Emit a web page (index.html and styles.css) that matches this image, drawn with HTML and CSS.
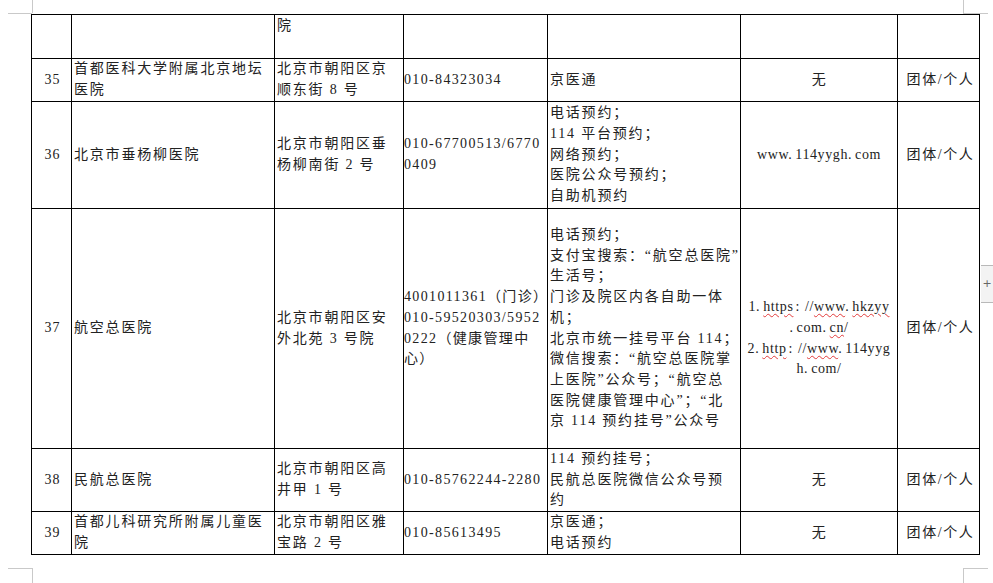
FILE: index.html
```html
<!DOCTYPE html>
<html lang="zh-CN">
<head>
<meta charset="utf-8">
<title>医院预约方式</title>
<link rel="stylesheet" href="styles.css">
</head>
<body>
<div class="page">
  <div class="mark mark-tl-h"></div>
  <div class="mark mark-tl-v"></div>
  <div class="mark mark-tr-h"></div>
  <div class="mark mark-tr-v"></div>
  <div class="mark mark-bl-h"></div>
  <div class="mark mark-bl-v"></div>
  <div class="mark mark-br-h"></div>
  <div class="mark mark-br-v"></div>
  <div class="add-tab">+</div>

  <table class="grid">
    <colgroup>
      <col class="c-no">
      <col class="c-name">
      <col class="c-addr">
      <col class="c-tel">
      <col class="c-way">
      <col class="c-web">
      <col class="c-type">
    </colgroup>
    <tbody>
      <tr class="r-top">
        <td></td>
        <td></td>
        <td class="addr top">院</td>
        <td></td>
        <td></td>
        <td></td>
        <td></td>
      </tr>
      <tr class="r-35">
        <td class="no">35</td>
        <td class="name">首都医科大学附属北京地坛<br>医院</td>
        <td class="addr">北京市朝阳区京<br>顺东街 8 号</td>
        <td class="tel">010-84323034</td>
        <td class="way">京医通</td>
        <td class="web">无</td>
        <td class="type">团体/个人</td>
      </tr>
      <tr class="r-36">
        <td class="no">36</td>
        <td class="name">北京市垂杨柳医院</td>
        <td class="addr">北京市朝阳区垂<br>杨柳南街 2 号</td>
        <td class="tel">010-67700513/6770<br>0409</td>
        <td class="way">电话预约；<br>114 平台预约；<br>网络预约；<br>医院公众号预约；<br>自助机预约</td>
        <td class="web"><span class="url">www<span class="dot">.</span>114yygh<span class="dot">.</span>com</span></td>
        <td class="type">团体/个人</td>
      </tr>
      <tr class="r-37">
        <td class="no">37</td>
        <td class="name">航空总医院</td>
        <td class="addr">北京市朝阳区安<br>外北苑 3 号院</td>
        <td class="tel">4001011361（门诊）<br>010-59520303/5952<br>0222（健康管理中<br>心）</td>
        <td class="way">电话预约；<br>支付宝搜索：“航空总医院”<br>生活号；<br>门诊及院区内各自助一体<br>机；<br>北京市统一挂号平台 114；<br>微信搜索：“航空总医院掌<br>上医院”公众号；“航空总<br>医院健康管理中心”；“北<br>京 114 预约挂号”公众号</td>
        <td class="web web-list"><span class="url">1<span class="dot">.</span><span class="spell">https</span><span class="colon">:</span>//<span class="spell">www</span><span class="dot">.</span><span class="spell">hkzyy</span></span><br><span class="url"><span class="dot">.</span>com<span class="dot">.</span><span class="spell">cn</span>/</span><br><span class="url">2<span class="dot">.</span><span class="spell">http</span><span class="colon">:</span>//<span class="spell">www</span><span class="dot">.</span>114yyg</span><br><span class="url">h<span class="dot">.</span>com/</span></td>
        <td class="type">团体/个人</td>
      </tr>
      <tr class="r-38">
        <td class="no">38</td>
        <td class="name">民航总医院</td>
        <td class="addr">北京市朝阳区高<br>井甲 1 号</td>
        <td class="tel">010-85762244-2280</td>
        <td class="way">114 预约挂号；<br>民航总医院微信公众号预<br>约</td>
        <td class="web">无</td>
        <td class="type">团体/个人</td>
      </tr>
      <tr class="r-39">
        <td class="no">39</td>
        <td class="name">首都儿科研究所附属儿童医<br>院</td>
        <td class="addr">北京市朝阳区雅<br>宝路 2 号</td>
        <td class="tel">010-85613495</td>
        <td class="way">京医通；<br>电话预约</td>
        <td class="web">无</td>
        <td class="type">团体/个人</td>
      </tr>
    </tbody>
  </table>
</div>
</body>
</html>
```

FILE: styles.css
```css
html, body {
  margin: 0;
  padding: 0;
  background: #ffffff;
}

.page {
  position: relative;
  width: 993px;
  height: 583px;
  overflow: hidden;
  padding: 14px 0 0 31px;
  box-sizing: border-box;
  font-family: "Liberation Serif", "Noto Sans CJK SC", serif;
  font-size: 14px;
  line-height: 20.7px;
  color: #222222;
}

/* crop marks of the Word page */
.mark {
  position: absolute;
  background: #c9c9c9;
}
.mark-tl-h { left: 8px;   top: 13px;  width: 24px; height: 1px; }
.mark-tl-v { left: 32px;  top: 0;     width: 1px;  height: 13px; }
.mark-tr-h { left: 963px; top: 13px;  width: 25px; height: 1px; }
.mark-tr-v { left: 963px; top: 0;     width: 1px;  height: 13px; }
.mark-bl-h { left: 8px;   top: 568px; width: 24px; height: 1px; }
.mark-bl-v { left: 32px;  top: 568px; width: 1px;  height: 15px; }
.mark-br-h { left: 963px; top: 568px; width: 25px; height: 1px; }
.mark-br-v { left: 963px; top: 568px; width: 1px;  height: 15px; }

.add-tab {
  position: absolute;
  left: 981px;
  top: 265px;
  width: 12px;
  height: 36px;
  background: #f3f3f3;
  border-top: 1px solid #b9b9b9;
  border-bottom: 1px solid #b9b9b9;
  color: #666666;
  font-family: "DejaVu Sans", sans-serif;
  font-size: 11px;
  line-height: 36px;
  text-align: center;
  overflow: hidden;
}

.grid {
  border-collapse: collapse;
  table-layout: fixed;
  width: 948px;
}

.c-no   { width: 40px; }
.c-name { width: 203px; }
.c-addr { width: 129px; }
.c-tel  { width: 144px; }
.c-way  { width: 193px; }
.c-web  { width: 157px; }
.c-type { width: 82px; }

.grid td {
  border: 1px solid #000000;
  padding: 0 0 0 2px;
  vertical-align: middle;
  white-space: nowrap;
  overflow: hidden;
  letter-spacing: 1.8px;
}

.r-top { height: 44px; }
.r-35  { height: 43px; }
.r-36  { height: 107px; }
.r-37  { height: 240px; }
.r-38  { height: 63px; }
.r-39  { height: 43px; }

.grid td.top {
  vertical-align: top;
  padding-top: 1px;
}

.grid td.no {
  text-align: center;
  letter-spacing: 1px;
}

.grid td.tel {
  padding-left: 0;
  letter-spacing: 1.35px;
}

.grid td.web {
  text-align: center;
  padding: 0 1px;
  letter-spacing: 0.6px;
}

.grid td.web-list {
  padding-top: 20px;
}

.grid td.type {
  text-align: center;
  padding: 0 0 0 4px;
  letter-spacing: 1.6px;
}

.dot {
  margin-right: 3px;
}

.colon {
  margin: 0 5px 0 2px;
}

.spell {
  text-decoration: underline wavy #e23b3b;
  text-decoration-thickness: 1px;
  text-underline-offset: 2px;
}
```
